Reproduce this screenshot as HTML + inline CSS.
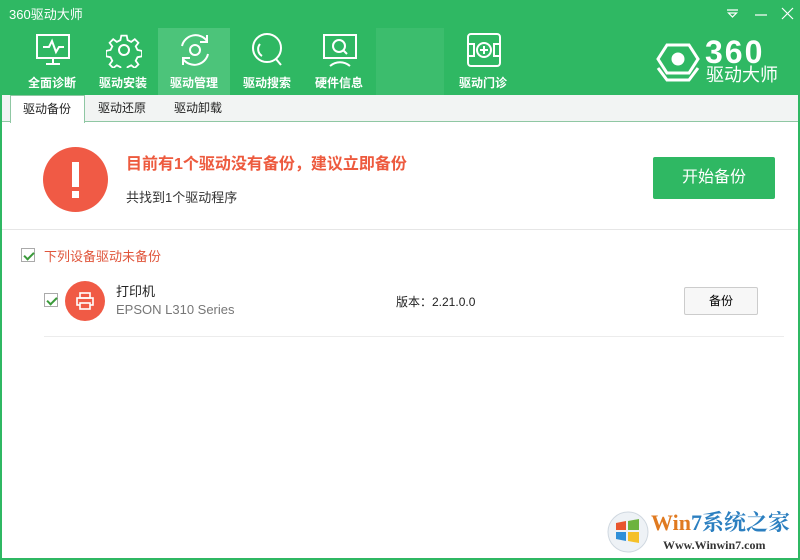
<!DOCTYPE html>
<html><head><meta charset="utf-8"><style>
*{margin:0;padding:0;box-sizing:border-box}
body{width:800px;height:560px;overflow:hidden;font-family:"Liberation Sans","Noto Sans CJK SC",sans-serif;background:#fff;position:relative}
.top{position:absolute;left:0;top:0;width:800px;height:95px;background:#2fb863}
.title{position:absolute;left:9px;top:4px;color:#fff;font-size:13px}
.nav{position:absolute;top:28px;width:72px;height:67px;text-align:center;color:#fff;font-size:12px;font-weight:bold}
.nav svg{position:absolute;left:19px;top:4px}
.nav span{position:absolute;left:0;right:0;top:46px}
.act{background:#4cc47a}
.tabs{position:absolute;left:0;top:95px;width:800px;height:27px;background:#f2f4f3;border-bottom:1px solid #8fc7a3}
.tab{position:absolute;top:0;height:27px;line-height:26px;font-size:12px;color:#222}
.tab.on{background:#fff;border:1px solid #8fc7a3;border-bottom:none;height:28px}
.frame{position:absolute;left:0;top:95px;width:800px;height:465px;border-left:2px solid #2fb863;border-right:2px solid #2fb863;border-bottom:2px solid #2fb863}
.cb{position:absolute;width:14px;height:14px;border:1px solid #aaa;background:#fff}
.cb:after{content:"";position:absolute;left:4px;top:1px;width:4px;height:8px;border:solid #3a9a3a;border-width:0 2px 2px 0;transform:rotate(45deg)}
</style></head><body>
<div class="top">
<div class="title">360驱动大师</div>
<svg style="position:absolute;left:725px;top:6px" width="70" height="16" fill="none" stroke="#fff" stroke-width="1.2"><path d="M2 4h11M3.5 7l4 4 4-4z"/><path d="M30 9h12"/><path d="M57 2l11 11M68 2L57 13"/></svg>
<div class="nav" style="left:16px"><svg width="36" height="36" fill="none" stroke="#fff" stroke-width="2"><rect x="2" y="3" width="32" height="23"/><path d="M8 15h6l3-6 4 11 3-5h5M18 26v5M11 32h14"/></svg><span>全面诊断</span></div>
<div class="nav" style="left:87px"><svg width="36" height="36" fill="none" stroke="#fff" stroke-width="2"><path d="M15 2h6l1 5 4 2 4-3 4 4-3 4 2 4 5 1v6l-5 1-2 4 3 4-4 4-4-3-4 2-1 5h-6l-1-5-4-2-4 3-4-4 3-4-2-4-5-1v-6l5-1 2-4-3-4 4-4 4 3 4-2z" transform="scale(.9) translate(2,2)"/><circle cx="18" cy="18" r="5"/></svg><span>驱动安装</span></div>
<div class="nav act" style="left:158px"><svg width="36" height="36" fill="none" stroke="#fff" stroke-width="2"><path d="M5 14A14 14 0 0 1 30 9M31 22A14 14 0 0 1 6 27"/><path d="M30 3v7h-7M6 33v-7h7"/><circle cx="18" cy="18" r="5"/></svg><span>驱动管理</span></div>
<div class="nav" style="left:231px"><svg width="36" height="36" fill="none" stroke="#fff" stroke-width="2"><circle cx="17" cy="16" r="14"/><path d="M10 12a8 8 0 0 0 2 12M26 27l5 6"/></svg><span>驱动搜索</span></div>
<div class="nav" style="left:303px"><svg width="36" height="36" fill="none" stroke="#fff" stroke-width="2"><rect x="2" y="3" width="32" height="23"/><circle cx="17" cy="14" r="6"/><path d="M21 18l4 4M8 34c6-5 14-5 20 0"/></svg><span>硬件信息</span></div>
<div style="position:absolute;left:376px;top:28px;width:68px;height:67px;background:#3cbd6d"></div>
<div class="nav" style="left:447px"><svg width="36" height="36" fill="none" stroke="#fff" stroke-width="2"><rect x="2" y="2" width="32" height="32" rx="3"/><path d="M2 12h6v12H2M34 12h-6v12h6"/><circle cx="18" cy="18" r="7"/><path d="M18 14v8M14 18h8"/></svg><span>驱动门诊</span></div>
<svg style="position:absolute;left:655px;top:42px" width="46" height="44" fill="none" stroke="#fff" stroke-width="3"><path d="M12 3h22l9 14-9 14H12L3 17z"/><path d="M3 26l9 12h22l9-12"/><circle cx="23" cy="17" r="5" fill="#fff"/></svg>
<div style="position:absolute;left:705px;top:37px;color:#fff;font-size:32px;font-weight:bold;letter-spacing:2px;line-height:30px">360</div>
<div style="position:absolute;left:706px;top:65px;color:#fff;font-size:18px;line-height:20px">驱动大师</div>
</div>
<div class="tabs">
<div class="tab on" style="left:10px;width:75px;padding-left:12px">驱动备份</div>
<div class="tab" style="left:98px">驱动还原</div>
<div class="tab" style="left:174px">驱动卸载</div>
</div>
<div class="frame"></div>
<div style="position:absolute;left:43px;top:147px;width:65px;height:65px;border-radius:50%;background:#f05a45"></div>
<div style="position:absolute;left:72px;top:162px;width:7px;height:25px;background:#fff"></div>
<div style="position:absolute;left:72px;top:191px;width:7px;height:7px;background:#fff"></div>
<div style="position:absolute;left:126px;top:150px;color:#ed5a3e;font-size:16px;font-weight:bold">目前有1个驱动没有备份，建议立即备份</div>
<div style="position:absolute;left:126px;top:187px;color:#333;font-size:13px">共找到1个驱动程序</div>
<div style="position:absolute;left:653px;top:157px;width:122px;height:42px;background:#2fb863;color:#fff;font-size:16px;text-align:center;line-height:42px;border-radius:2px">开始备份</div>
<div style="position:absolute;left:2px;top:229px;width:796px;height:1px;background:#e6e6e6"></div>
<div class="cb" style="left:21px;top:248px"></div>
<div style="position:absolute;left:44px;top:246px;color:#e0563c;font-size:13px">下列设备驱动未备份</div>
<div class="cb" style="left:44px;top:293px"></div>
<div style="position:absolute;left:65px;top:281px;width:40px;height:40px;border-radius:50%;background:#f05a45"></div>
<svg style="position:absolute;left:76px;top:292px" width="18" height="18" fill="none" stroke="#fff" stroke-width="1.6"><rect x="4" y="1" width="10" height="5"/><rect x="1" y="6" width="16" height="7"/><rect x="4" y="11" width="10" height="6" fill="#f05a45"/></svg>
<div style="position:absolute;left:116px;top:281px;color:#222;font-size:13px">打印机</div>
<div style="position:absolute;left:116px;top:302px;color:#777;font-size:13px">EPSON L310 Series</div>
<div style="position:absolute;left:396px;top:293px;color:#222;font-size:12px">版本：2.21.0.0</div>
<div style="position:absolute;left:684px;top:287px;width:74px;height:28px;border:1px solid #ccc;background:#f7f7f7;font-size:12px;text-align:center;line-height:26px;border-radius:2px">备份</div>
<div style="position:absolute;left:44px;top:336px;width:740px;height:1px;background:#ececec"></div>
<svg style="position:absolute;left:606px;top:510px" width="44" height="44"><circle cx="22" cy="22" r="20" fill="#eef2f6" stroke="#d0d8e0"/><path d="M10 13l10-2v9H10z" fill="#e8562f"/><path d="M22 11l11-2v11H22z" fill="#6db33f"/><path d="M10 22h10v9l-10-2z" fill="#2f8fd8"/><path d="M22 22h11v11l-11-2z" fill="#f5c028"/></svg>
<div style="position:absolute;left:651px;top:510px;font-size:22px;font-weight:bold;font-family:'Liberation Serif','Noto Serif CJK SC',serif;color:#e07a20;line-height:26px">Win<span style="color:#2b7fc0">7系统之家</span></div>
<div style="position:absolute;left:663px;top:538px;font-size:12px;font-weight:bold;font-family:'Liberation Serif',serif;color:#333">Www.Winwin7.com</div>
</body></html>
